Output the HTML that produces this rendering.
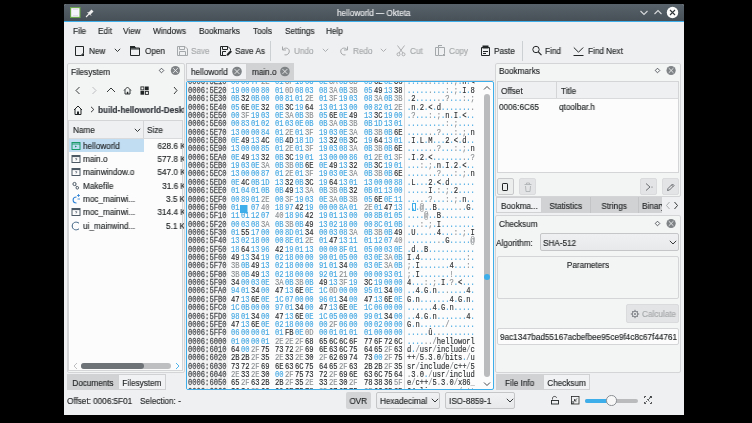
<!DOCTYPE html><html><head><meta charset="utf-8"><style>
*{margin:0;padding:0}
html,body{width:752px;height:423px;overflow:hidden;background:#000;position:relative}
.t{position:absolute;white-space:nowrap;font-family:"Liberation Sans",sans-serif;transform:scaleX(0.95);transform-origin:0 50%;will-change:transform;-webkit-text-stroke:0.15px currentColor}
.r{position:absolute;left:0;height:9px;width:310px;font-family:"Liberation Mono",monospace;font-size:8.6px;line-height:9px;will-change:transform;-webkit-text-stroke:0.15px currentColor}
.r span{position:absolute;top:0;white-space:pre;transform:scaleX(0.83);transform-origin:0 0}
.r .o{color:#505356;-webkit-text-stroke:0.3px currentColor}
.b{color:#45a8e2}
.g{color:#8b8f92}
.k{color:#2b2e30}
.r i{font-style:normal;display:inline-block;width:5.12px;text-align:center}
.cur{width:8.8px;height:8px;background:#3daee9;top:1px!important}
</style></head><body><div style="position:absolute;left:64px;top:4px;width:619.7px;height:411.3px;background:#eff0f1;border-radius:2px 2px 0 0;"></div>
<div style="position:absolute;left:64px;top:4px;width:619.7px;height:17px;background:linear-gradient(#58626a,#475057);border-radius:2px 2px 0 0;"></div>
<div style="position:absolute;left:64px;top:21px;width:619.7px;height:1px;background:#3daee9;"></div>
<svg style="position:absolute;left:69.5px;top:7px;" width="11" height="11" viewBox="0 0 11 11"><rect x="0.6" y="0.6" width="9.4" height="9.8" fill="#f6f3fa" stroke="#6aa84a" stroke-width="1.1"/><path d="M3 2.5 H8 M3 8.5 H8" stroke="#ddd3ea" stroke-width="0.8"/></svg>
<svg style="position:absolute;left:85px;top:8px;" width="10" height="10" viewBox="0 0 10 10"><path d="M1 9 L4 6" stroke="#f0f0f0" stroke-width="1.1"/><path d="M3 5 L6.5 1.5 L8.5 3.5 L5 7 Z" fill="#f0f0f0"/><path d="M2.5 4 L6 7.5" stroke="#f0f0f0" stroke-width="1"/></svg>
<div class="t" style="left:336.5px;top:6.90px;line-height:12px;font-size:8.6px;color:#e8eaec;">helloworld — Okteta</div>
<svg style="position:absolute;left:639px;top:8px;" width="10" height="9" viewBox="0 0 10 9"><path d="M1.5 3 L5 6.5 L8.5 3" fill="none" stroke="#d7d9db" stroke-width="1.1"/></svg>
<svg style="position:absolute;left:653px;top:8px;" width="10" height="9" viewBox="0 0 10 9"><path d="M1.5 6 L5 2.5 L8.5 6" fill="none" stroke="#d7d9db" stroke-width="1.1"/></svg>
<svg style="position:absolute;left:666px;top:6px;" width="13" height="13" viewBox="0 0 13 13"><circle cx="6.5" cy="6.5" r="5.7" fill="#fcfcfc"/><path d="M4 4 L9 9 M9 4 L4 9" stroke="#31363b" stroke-width="1.1"/></svg>
<div class="t" style="left:72.8px;top:24.80px;line-height:12px;font-size:8.6px;color:#232627;">File</div>
<div class="t" style="left:97.5px;top:24.80px;line-height:12px;font-size:8.6px;color:#232627;">Edit</div>
<div class="t" style="left:123.3px;top:24.80px;line-height:12px;font-size:8.6px;color:#232627;">View</div>
<div class="t" style="left:153px;top:24.80px;line-height:12px;font-size:8.6px;color:#232627;">Windows</div>
<div class="t" style="left:198.8px;top:24.80px;line-height:12px;font-size:8.6px;color:#232627;">Bookmarks</div>
<div class="t" style="left:252.9px;top:24.80px;line-height:12px;font-size:8.6px;color:#232627;">Tools</div>
<div class="t" style="left:284.5px;top:24.80px;line-height:12px;font-size:8.6px;color:#232627;">Settings</div>
<div class="t" style="left:326.4px;top:24.80px;line-height:12px;font-size:8.6px;color:#232627;">Help</div>
<div class="t" style="left:88.6px;top:45.00px;line-height:12px;font-size:8.6px;color:#232627;">New</div>
<div class="t" style="left:144.5px;top:45.00px;line-height:12px;font-size:8.6px;color:#232627;">Open</div>
<div class="t" style="left:191px;top:45.00px;line-height:12px;font-size:8.6px;color:#a5a8aa;">Save</div>
<div class="t" style="left:234.5px;top:45.00px;line-height:12px;font-size:8.6px;color:#232627;">Save As</div>
<div class="t" style="left:294px;top:45.00px;line-height:12px;font-size:8.6px;color:#a5a8aa;">Undo</div>
<div class="t" style="left:352.8px;top:45.00px;line-height:12px;font-size:8.6px;color:#a5a8aa;">Redo</div>
<div class="t" style="left:409.9px;top:45.00px;line-height:12px;font-size:8.6px;color:#a5a8aa;">Cut</div>
<div class="t" style="left:449.1px;top:45.00px;line-height:12px;font-size:8.6px;color:#a5a8aa;">Copy</div>
<div class="t" style="left:493.5px;top:45.00px;line-height:12px;font-size:8.6px;color:#232627;">Paste</div>
<div class="t" style="left:545.4px;top:45.00px;line-height:12px;font-size:8.6px;color:#232627;">Find</div>
<div class="t" style="left:587.7px;top:45.00px;line-height:12px;font-size:8.6px;color:#232627;">Find Next</div>
<div style="position:absolute;left:270px;top:41px;width:1px;height:20px;background:#cdd0d2;"></div>
<div style="position:absolute;left:521.5px;top:41px;width:1.0px;height:20px;background:#cdd0d2;"></div>
<svg style="position:absolute;left:113.7px;top:48px;" width="7" height="5" viewBox="0 0 7 5"><path d="M0.8 0.8 L3.5 3.5 L6.2 0.8" fill="none" stroke="#232627" stroke-width="0.9"/></svg>
<svg style="position:absolute;left:322px;top:48px;" width="7" height="5" viewBox="0 0 7 5"><path d="M0.8 0.8 L3.5 3.5 L6.2 0.8" fill="none" stroke="#a5a8aa" stroke-width="0.9"/></svg>
<svg style="position:absolute;left:379.5px;top:48px;" width="7" height="5" viewBox="0 0 7 5"><path d="M0.8 0.8 L3.5 3.5 L6.2 0.8" fill="none" stroke="#a5a8aa" stroke-width="0.9"/></svg>
<svg style="position:absolute;left:74px;top:45px;" width="12" height="12" viewBox="0 0 12 12"><path d="M1.5 1.5 H9.5 V8 L7 10.5 H1.5 Z" fill="none" stroke="#232627"/><path d="M10 8 V10.9 H6.6 Z" fill="#232627"/></svg>
<svg style="position:absolute;left:130px;top:45px;" width="12" height="12" viewBox="0 0 12 12"><path d="M0.5 1.5 H4.5 L5.5 3 H9.5 V10.5 H0.5 Z" fill="none" stroke="#232627"/><path d="M0 1 H4.8 L6 3.5 H0 Z" fill="#232627"/><path d="M0.5 4 H9.5" stroke="#232627"/></svg>
<svg style="position:absolute;left:177px;top:45px;" width="12" height="12" viewBox="0 0 12 12"><path d="M0.5 1.5 H8 L10.5 4 V10.5 H0.5 Z" fill="none" stroke="#a5a8aa"/><path d="M2.5 1.5 V4.5 H7.5 V1.5 M2.5 10.5 V6.5 H8.5 V10.5" fill="none" stroke="#a5a8aa"/></svg>
<svg style="position:absolute;left:220px;top:45px;" width="12" height="12" viewBox="0 0 12 12"><path d="M6 10.5 H0.5 V1.5 H8 L10.5 4 V5.5" fill="none" stroke="#232627"/><path d="M2.5 1.5 V4.5 H7.5 V1.5 M2.5 10.5 V6.5 H6" fill="none" stroke="#232627"/><path d="M6.5 10.8 L6.8 9 L10.5 5.3 L12 6.8 L8.3 10.5 Z" fill="#232627"/></svg>
<svg style="position:absolute;left:281px;top:45px;" width="12" height="12" viewBox="0 0 12 12"><path d="M1.5 1.5 V5 H5" fill="none" stroke="#a5a8aa"/><path d="M1.8 4.8 C3 2.5 7.8 2.2 8.3 6 C8.6 9 5.5 10.5 3.5 9.8" fill="none" stroke="#a5a8aa"/></svg>
<svg style="position:absolute;left:339px;top:45px;" width="12" height="12" viewBox="0 0 12 12"><path d="M8.5 1.5 V5 H5" fill="none" stroke="#a5a8aa"/><path d="M8.2 4.8 C7 2.5 2.2 2.2 1.7 6 C1.4 9 4.5 10.5 6.5 9.8" fill="none" stroke="#a5a8aa"/></svg>
<svg style="position:absolute;left:396px;top:45px;" width="12" height="12" viewBox="0 0 12 12"><path d="M1.5 0.5 L7 8 M8.5 0.5 L3 8" stroke="#a5a8aa" stroke-width="0.9"/><circle cx="2.5" cy="9.3" r="1.5" fill="none" stroke="#a5a8aa" stroke-width="0.9"/><circle cx="7.5" cy="9.3" r="1.5" fill="none" stroke="#a5a8aa" stroke-width="0.9"/></svg>
<svg style="position:absolute;left:435px;top:45px;" width="12" height="12" viewBox="0 0 12 12"><path d="M0.5 2.5 H3 M0.5 2.5 V10.5 H3" fill="none" stroke="#a5a8aa"/><path d="M3 0.5 H7 M3.5 0.5 V2.5" fill="none" stroke="#a5a8aa"/><path d="M3.5 2.5 H9.5 V8.5 L7.5 10.5 H3.5 Z" fill="none" stroke="#a5a8aa"/><path d="M10 8.5 V11 H7.2 Z" fill="#a5a8aa"/></svg>
<svg style="position:absolute;left:480px;top:45px;" width="12" height="12" viewBox="0 0 12 12"><path d="M1.5 2.5 H9.5 V10.5 H1.5 Z" fill="none" stroke="#232627"/><rect x="2.5" y="0.5" width="6" height="3" fill="#232627"/><path d="M3 6.5 H8 M3 8.5 H6" stroke="#232627"/></svg>
<svg style="position:absolute;left:532px;top:45px;" width="12" height="12" viewBox="0 0 12 12"><circle cx="4" cy="4.5" r="3.2" fill="none" stroke="#232627"/><path d="M6.4 7 L9.5 10.1" stroke="#232627" stroke-width="1.1"/></svg>
<svg style="position:absolute;left:573px;top:45px;" width="12" height="12" viewBox="0 0 12 12"><path d="M0.8 2.5 L5.5 7.2 L10.2 2.5" fill="none" stroke="#232627"/><path d="M0.5 10.5 H10.5" stroke="#232627"/></svg>
<div style="position:absolute;left:67px;top:63px;width:118px;height:310px;background:#f3f4f4;border:1px solid #d3d5d6;box-sizing:border-box;border-radius:2px;"></div>
<div class="t" style="left:70.7px;top:65.70px;line-height:12px;font-size:8.6px;color:#232627;">Filesystem</div>
<svg style="position:absolute;left:157px;top:66px;" width="8" height="8" viewBox="0 0 8 8"><path d="M4.5 2.2 L6.8 4.5 L4.5 6.8 L2.2 4.5 Z" fill="none" stroke="#3a3f44" stroke-width="0.8"/></svg>
<svg style="position:absolute;left:169px;top:64px;" width="12" height="12" viewBox="0 0 12 12"><circle cx="6.400000000000006" cy="6.5" r="4.6" fill="#7f8386"/><path d="M4.000000000000005 4.1 L8.800000000000006 8.9 M8.800000000000006 4.1 L4.000000000000005 8.9" stroke="#f3f4f4" stroke-width="0.85"/></svg>
<svg style="position:absolute;left:74px;top:86px;" width="8" height="9" viewBox="0 0 8 9"><path d="M5.5 1 L2 4.5 L5.5 8" fill="none" stroke="#232627" stroke-width="0.9"/></svg>
<svg style="position:absolute;left:90px;top:86px;" width="8" height="9" viewBox="0 0 8 9"><path d="M2.5 1 L6 4.5 L2.5 8" fill="none" stroke="#b5b8ba" stroke-width="0.9"/></svg>
<svg style="position:absolute;left:106px;top:86px;" width="10" height="9" viewBox="0 0 10 9"><path d="M1 6 L5 2 L9 6" fill="none" stroke="#232627" stroke-width="0.9"/></svg>
<svg style="position:absolute;left:123px;top:86px;" width="9" height="9" viewBox="0 0 9 9"><path d="M1 4.5 L4.5 1 L8 4.5 M2 3.5 V8 H7 V3.5" fill="none" stroke="#232627" stroke-width="0.9"/><rect x="3.8" y="5.8" width="1.5" height="2.2" fill="#232627"/></svg>
<svg style="position:absolute;left:140px;top:86px;" width="9" height="9" viewBox="0 0 9 9"><rect x="0.9" y="0.9" width="3" height="3" fill="none" stroke="#232627" stroke-width="0.9"/><rect x="5" y="0.5" width="3.7" height="3.7" fill="#232627"/><rect x="0.5" y="5" width="3.7" height="3.7" fill="#232627"/><rect x="5.4" y="5.4" width="3" height="3" fill="none" stroke="#232627" stroke-width="0.9"/></svg>
<svg style="position:absolute;left:172px;top:86px;" width="7" height="9" viewBox="0 0 7 9"><path d="M2 1 L5 4.5 L2 8" fill="none" stroke="#232627" stroke-width="0.9"/></svg>
<svg style="position:absolute;left:72.5px;top:105px;" width="10" height="10" viewBox="0 0 10 10"><path d="M1 5 L5 1 L9 5 M2 4 V9.5 H8 V4" fill="none" stroke="#232627" stroke-width="1"/><rect x="4" y="6.5" width="2" height="3" fill="#232627"/></svg>
<svg style="position:absolute;left:89.5px;top:106px;" width="5" height="7" viewBox="0 0 5 7"><path d="M1 0.8 L3.8 3.5 L1 6.2" fill="none" stroke="#232627" stroke-width="0.9"/></svg>
<div style="position:absolute;left:97.5px;top:103.5px;width:86px;height:12px;overflow:hidden;"><div class="t" style="left:0;top:0;line-height:12px;font-size:8.6px;font-weight:bold;color:#31363b;">build-helloworld-Desktop</div></div>
<div style="position:absolute;left:68px;top:120px;width:115px;height:251px;background:#fcfcfc;border:1px solid #d3d5d6;box-sizing:border-box;"></div>
<div style="position:absolute;left:69px;top:121px;width:113px;height:18px;background:#eff0f1;border-bottom:1px solid #d8dadb;box-sizing:border-box;"></div>
<div style="position:absolute;left:143px;top:121px;width:1px;height:17px;background:#d3d5d6;"></div>
<div class="t" style="left:72.7px;top:124.00px;line-height:12px;font-size:8.6px;color:#232627;">Name</div>
<svg style="position:absolute;left:134px;top:128px;" width="7" height="5" viewBox="0 0 7 5"><path d="M0.8 0.8 L3.5 3.5 L6.2 0.8" fill="none" stroke="#232627" stroke-width="0.9"/></svg>
<div class="t" style="left:147.4px;top:124.00px;line-height:12px;font-size:8.6px;color:#232627;">Size</div>
<div style="position:absolute;left:69px;top:139px;width:74.5px;height:13px;background:#c1ddf2;"></div>
<div style="position:absolute;left:144px;top:138px;width:40px;height:95px;overflow:hidden;">
<div class="t" style="right:-1.5px;transform-origin:100% 50%;top:1.70px;line-height:12px;font-size:8.6px;color:#232627;">628.6 K</div>
<div class="t" style="right:-1.5px;transform-origin:100% 50%;top:15.00px;line-height:12px;font-size:8.6px;color:#232627;">577.8 K</div>
<div class="t" style="right:-1.5px;transform-origin:100% 50%;top:28.30px;line-height:12px;font-size:8.6px;color:#232627;">547.0 K</div>
<div class="t" style="right:-1.5px;transform-origin:100% 50%;top:41.60px;line-height:12px;font-size:8.6px;color:#232627;">31.6 K</div>
<div class="t" style="right:-1.5px;transform-origin:100% 50%;top:54.90px;line-height:12px;font-size:8.6px;color:#232627;">3.5 K</div>
<div class="t" style="right:-1.5px;transform-origin:100% 50%;top:68.20px;line-height:12px;font-size:8.6px;color:#232627;">314.4 K</div>
<div class="t" style="right:-1.5px;transform-origin:100% 50%;top:81.50px;line-height:12px;font-size:8.6px;color:#232627;">5.1 K</div>
</div>
<div class="t" style="left:82.8px;top:139.70px;line-height:12px;font-size:8.6px;color:#232627;">helloworld</div>
<div class="t" style="left:82.8px;top:153.00px;line-height:12px;font-size:8.6px;color:#232627;">main.o</div>
<div class="t" style="left:82.8px;top:166.30px;line-height:12px;font-size:8.6px;color:#232627;">mainwindow.o</div>
<div class="t" style="left:82.8px;top:179.60px;line-height:12px;font-size:8.6px;color:#232627;">Makefile</div>
<div class="t" style="left:82.8px;top:192.90px;line-height:12px;font-size:8.6px;color:#232627;">moc_mainwi...</div>
<div class="t" style="left:82.8px;top:206.20px;line-height:12px;font-size:8.6px;color:#232627;">moc_mainwi...</div>
<div class="t" style="left:82.8px;top:219.50px;line-height:12px;font-size:8.6px;color:#232627;">ui_mainwind...</div>
<svg style="position:absolute;left:70.5px;top:140.7px;" width="10" height="10" viewBox="0 0 10 10"><rect x="1" y="1.5" width="8" height="7" fill="none" stroke="#1d9a6c" stroke-width="1"/><path d="M1 3 H9" stroke="#1d9a6c" stroke-width="1"/><path d="M4 4.5 L6 5.5 L4 6.5 Z" fill="#1d9a6c"/></svg>
<svg style="position:absolute;left:70.5px;top:154.0px;" width="10" height="10" viewBox="0 0 10 10"><rect x="1" y="1.5" width="8" height="7" fill="none" stroke="#4d5a66" stroke-width="1"/><path d="M1 2.5 H9" stroke="#4d5a66" stroke-width="1.2"/><path d="M4.2 4.5 H5.8 V5.5 H5 V6.5" fill="none" stroke="#4d5a66" stroke-width="0.6"/></svg>
<svg style="position:absolute;left:70.5px;top:167.29999999999998px;" width="10" height="10" viewBox="0 0 10 10"><rect x="1" y="1.5" width="8" height="7" fill="none" stroke="#4d5a66" stroke-width="1"/><path d="M1 2.5 H9" stroke="#4d5a66" stroke-width="1.2"/><path d="M4.2 4.5 H5.8 V5.5 H5 V6.5" fill="none" stroke="#4d5a66" stroke-width="0.6"/></svg>
<svg style="position:absolute;left:70.5px;top:180.6px;" width="10" height="10" viewBox="0 0 10 10"><circle cx="3.5" cy="3" r="1.6" fill="none" stroke="#4d5a66" stroke-width="1"/><circle cx="6.3" cy="6.8" r="1.3" fill="none" stroke="#4d5a66" stroke-width="1"/><path d="M4.5 4.3 L5.5 5.6" stroke="#4d5a66" stroke-width="0.9"/></svg>
<svg style="position:absolute;left:70.5px;top:193.89999999999998px;" width="10" height="10" viewBox="0 0 10 10"><path d="M5.5 3 C1 3 1 9 5.5 9" fill="none" stroke="#2a7fd4" stroke-width="1.1"/><path d="M6 1.5 H9 M7.5 0 V3 M6.5 5 H9" stroke="#2a7fd4" stroke-width="0.8"/></svg>
<svg style="position:absolute;left:70.5px;top:207.2px;" width="10" height="10" viewBox="0 0 10 10"><rect x="1" y="1.5" width="8" height="7" fill="none" stroke="#4d5a66" stroke-width="1"/><path d="M1 2.5 H9" stroke="#4d5a66" stroke-width="1.2"/><path d="M4.2 4.5 H5.8 V5.5 H5 V6.5" fill="none" stroke="#4d5a66" stroke-width="0.6"/></svg>
<svg style="position:absolute;left:70.5px;top:220.5px;" width="10" height="10" viewBox="0 0 10 10"><path d="M8 2.2 C5 0 1.2 1.5 1.2 5 C1.2 8.5 5 10 8 7.8" fill="none" stroke="#3b5f80" stroke-width="1"/></svg>
<svg style="position:absolute;left:72px;top:362px;" width="7" height="8" viewBox="0 0 7 8"><path d="M5 1 L2 4 L5 7" fill="none" stroke="#b5b8ba" stroke-width="0.9"/></svg>
<div style="position:absolute;left:80.5px;top:362.5px;width:90.0px;height:6.0px;background:#bdbfc1;border-radius:3px;"></div>
<div style="position:absolute;left:80.5px;top:362.5px;width:63.0px;height:6.0px;background:#6e7377;border-radius:3px;"></div>
<svg style="position:absolute;left:174px;top:362px;" width="7" height="8" viewBox="0 0 7 8"><path d="M2 1 L5 4 L2 7" fill="none" stroke="#3daee9" stroke-width="0.9"/></svg>
<div style="position:absolute;left:66.5px;top:374.3px;width:51.900000000000006px;height:15.899999999999977px;background:#d1d2d3;"></div>
<div class="t" style="left:66.5px;width:51.900000000000006px;text-align:center;transform-origin:50% 50%;top:377.05px;line-height:12px;font-size:8.6px;color:#232627;">Documents</div>
<div style="position:absolute;left:118.4px;top:374.3px;width:47.79999999999998px;height:15.899999999999977px;background:#f1f2f3;border:1px solid #cfd1d2;box-sizing:border-box;"></div>
<div class="t" style="left:118.4px;width:47.79999999999998px;text-align:center;transform-origin:50% 50%;top:377.05px;line-height:12px;font-size:8.6px;color:#232627;">Filesystem</div>
<div style="position:absolute;left:186px;top:79.5px;width:307.5px;height:1.0px;background:#d9d5d5;"></div>
<div style="position:absolute;left:186px;top:63px;width:60.5px;height:17px;background:#f1f2f3;border:1px solid #cfd1d2;box-sizing:border-box;"></div>
<div class="t" style="left:191.3px;top:65.50px;line-height:12px;font-size:8.6px;color:#232627;">helloworld</div>
<svg style="position:absolute;left:231px;top:65px;" width="12" height="12" viewBox="0 0 12 12"><circle cx="6" cy="6.5" r="4.8" fill="#7f8386"/><path d="M3.6 4.1 L8.4 8.9 M8.4 4.1 L3.6 8.9" stroke="#f3f4f4" stroke-width="0.85"/></svg>
<div style="position:absolute;left:246.5px;top:63px;width:47.10000000000002px;height:16.5px;background:#d1d2d3;"></div>
<div class="t" style="left:251.9px;top:65.50px;line-height:12px;font-size:8.6px;color:#232627;">main.o</div>
<svg style="position:absolute;left:278px;top:65px;" width="12" height="12" viewBox="0 0 12 12"><circle cx="6.899999999999977" cy="6.5" r="4.8" fill="#7f8386"/><path d="M4.499999999999977 4.1 L9.299999999999978 8.9 M9.299999999999978 4.1 L4.499999999999977 8.9" stroke="#f3f4f4" stroke-width="0.85"/></svg>
<div style="position:absolute;left:186px;top:81px;width:307.5px;height:308.5px;background:#fcfcfc;border:1px solid #3daee9;box-sizing:border-box;border-radius:2px;overflow:hidden;">
<div style="position:absolute;left:0;top:0;width:41px;height:100%;background:#f3f3f3;"></div>
<div style="position:absolute;left:217px;top:0;width:1px;height:100%;background:#d8d9da;"></div>
<div class="r" style="top:-4.00px"><span class="o" style="left:0.80px">0006:5E10</span><span class="b" style="left:43.60px">00</span><span class="b" style="left:53.65px">00</span><span class="b" style="left:63.70px">7F</span><span class="g" style="left:73.75px">2E</span><span class="b" style="left:87.90px">01</span><span class="g" style="left:97.95px">3F</span><span class="b" style="left:108.00px">19</span><span class="b" style="left:118.05px">03</span><span class="b" style="left:132.20px">0E</span><span class="g" style="left:142.25px">3A</span><span class="b" style="left:152.30px">0B</span><span class="g" style="left:162.35px">3B</span><span class="b" style="left:176.50px">05</span><span class="k" style="left:186.55px">6E</span><span class="b" style="left:196.60px">0E</span><span class="k" style="left:206.65px">3C</span><span class="a" style="left:220.00px"><i class="b">.</i><i class="b">.</i><i class="b">.</i><i class="g">.</i><i class="b">.</i><i class="g">?</i><i class="b">.</i><i class="b">.</i><i class="b">.</i><i class="g">:</i><i class="b">.</i><i class="g">;</i><i class="b">.</i><i class="k">n</i><i class="b">.</i><i class="k">&lt;</i></span></div>
<div class="r" style="top:5.00px"><span class="o" style="left:0.80px">0006:5E20</span><span class="b" style="left:43.60px">19</span><span class="b" style="left:53.65px">00</span><span class="b" style="left:63.70px">00</span><span class="b" style="left:73.75px">80</span><span class="b" style="left:87.90px">01</span><span class="g" style="left:97.95px">0D</span><span class="b" style="left:108.00px">08</span><span class="b" style="left:118.05px">03</span><span class="b" style="left:132.20px">08</span><span class="g" style="left:142.25px">3A</span><span class="b" style="left:152.30px">0B</span><span class="g" style="left:162.35px">3B</span><span class="b" style="left:176.50px">05</span><span class="k" style="left:186.55px">49</span><span class="b" style="left:196.60px">13</span><span class="k" style="left:206.65px">38</span><span class="a" style="left:220.00px"><i class="b">.</i><i class="b">.</i><i class="b">.</i><i class="b">.</i><i class="b">.</i><i class="g">.</i><i class="b">.</i><i class="b">.</i><i class="b">.</i><i class="g">:</i><i class="b">.</i><i class="g">;</i><i class="b">.</i><i class="k">I</i><i class="b">.</i><i class="k">8</i></span></div>
<div class="r" style="top:13.00px"><span class="o" style="left:0.80px">0006:5E30</span><span class="b" style="left:43.60px">0B</span><span class="k" style="left:53.65px">32</span><span class="b" style="left:63.70px">0B</span><span class="b" style="left:73.75px">00</span><span class="b" style="left:87.90px">00</span><span class="b" style="left:97.95px">81</span><span class="b" style="left:108.00px">01</span><span class="g" style="left:118.05px">2E</span><span class="b" style="left:132.20px">01</span><span class="g" style="left:142.25px">3F</span><span class="b" style="left:152.30px">19</span><span class="b" style="left:162.35px">03</span><span class="b" style="left:176.50px">08</span><span class="g" style="left:186.55px">3A</span><span class="b" style="left:196.60px">0B</span><span class="g" style="left:206.65px">3B</span><span class="a" style="left:220.00px"><i class="b">.</i><i class="k">2</i><i class="b">.</i><i class="b">.</i><i class="b">.</i><i class="b">.</i><i class="b">.</i><i class="g">.</i><i class="b">.</i><i class="g">?</i><i class="b">.</i><i class="b">.</i><i class="b">.</i><i class="g">:</i><i class="b">.</i><i class="g">;</i></span></div>
<div class="r" style="top:22.00px"><span class="o" style="left:0.80px">0006:5E40</span><span class="b" style="left:43.60px">05</span><span class="k" style="left:53.65px">6E</span><span class="b" style="left:63.70px">0E</span><span class="k" style="left:73.75px">32</span><span class="b" style="left:87.90px">0B</span><span class="k" style="left:97.95px">3C</span><span class="b" style="left:108.00px">19</span><span class="k" style="left:118.05px">64</span><span class="b" style="left:132.20px">13</span><span class="b" style="left:142.25px">01</span><span class="b" style="left:152.30px">13</span><span class="b" style="left:162.35px">00</span><span class="b" style="left:176.50px">00</span><span class="b" style="left:186.55px">82</span><span class="b" style="left:196.60px">01</span><span class="g" style="left:206.65px">2E</span><span class="a" style="left:220.00px"><i class="b">.</i><i class="k">n</i><i class="b">.</i><i class="k">2</i><i class="b">.</i><i class="k">&lt;</i><i class="b">.</i><i class="k">d</i><i class="b">.</i><i class="b">.</i><i class="b">.</i><i class="b">.</i><i class="b">.</i><i class="b">.</i><i class="b">.</i><i class="g">.</i></span></div>
<div class="r" style="top:30.00px"><span class="o" style="left:0.80px">0006:5E50</span><span class="b" style="left:43.60px">00</span><span class="g" style="left:53.65px">3F</span><span class="b" style="left:63.70px">19</span><span class="b" style="left:73.75px">03</span><span class="b" style="left:87.90px">0E</span><span class="g" style="left:97.95px">3A</span><span class="b" style="left:108.00px">0B</span><span class="g" style="left:118.05px">3B</span><span class="b" style="left:132.20px">05</span><span class="k" style="left:142.25px">6E</span><span class="b" style="left:152.30px">0E</span><span class="k" style="left:162.35px">49</span><span class="b" style="left:176.50px">13</span><span class="k" style="left:186.55px">3C</span><span class="b" style="left:196.60px">19</span><span class="b" style="left:206.65px">00</span><span class="a" style="left:220.00px"><i class="b">.</i><i class="g">?</i><i class="b">.</i><i class="b">.</i><i class="b">.</i><i class="g">:</i><i class="b">.</i><i class="g">;</i><i class="b">.</i><i class="k">n</i><i class="b">.</i><i class="k">I</i><i class="b">.</i><i class="k">&lt;</i><i class="b">.</i><i class="b">.</i></span></div>
<div class="r" style="top:38.00px"><span class="o" style="left:0.80px">0006:5E60</span><span class="b" style="left:43.60px">00</span><span class="b" style="left:53.65px">83</span><span class="b" style="left:63.70px">01</span><span class="b" style="left:73.75px">02</span><span class="b" style="left:87.90px">01</span><span class="b" style="left:97.95px">03</span><span class="b" style="left:108.00px">0E</span><span class="b" style="left:118.05px">0B</span><span class="b" style="left:132.20px">0B</span><span class="g" style="left:142.25px">3A</span><span class="b" style="left:152.30px">0B</span><span class="g" style="left:162.35px">3B</span><span class="b" style="left:176.50px">0B</span><span class="b" style="left:186.55px">1D</span><span class="b" style="left:196.60px">13</span><span class="b" style="left:206.65px">01</span><span class="a" style="left:220.00px"><i class="b">.</i><i class="b">.</i><i class="b">.</i><i class="b">.</i><i class="b">.</i><i class="b">.</i><i class="b">.</i><i class="b">.</i><i class="b">.</i><i class="g">:</i><i class="b">.</i><i class="g">;</i><i class="b">.</i><i class="b">.</i><i class="b">.</i><i class="b">.</i></span></div>
<div class="r" style="top:47.00px"><span class="o" style="left:0.80px">0006:5E70</span><span class="b" style="left:43.60px">13</span><span class="b" style="left:53.65px">00</span><span class="b" style="left:63.70px">00</span><span class="b" style="left:73.75px">84</span><span class="b" style="left:87.90px">01</span><span class="g" style="left:97.95px">2E</span><span class="b" style="left:108.00px">01</span><span class="g" style="left:118.05px">3F</span><span class="b" style="left:132.20px">19</span><span class="b" style="left:142.25px">03</span><span class="b" style="left:152.30px">0E</span><span class="g" style="left:162.35px">3A</span><span class="b" style="left:176.50px">0B</span><span class="g" style="left:186.55px">3B</span><span class="b" style="left:196.60px">0B</span><span class="k" style="left:206.65px">6E</span><span class="a" style="left:220.00px"><i class="b">.</i><i class="b">.</i><i class="b">.</i><i class="b">.</i><i class="b">.</i><i class="g">.</i><i class="b">.</i><i class="g">?</i><i class="b">.</i><i class="b">.</i><i class="b">.</i><i class="g">:</i><i class="b">.</i><i class="g">;</i><i class="b">.</i><i class="k">n</i></span></div>
<div class="r" style="top:55.00px"><span class="o" style="left:0.80px">0006:5E80</span><span class="b" style="left:43.60px">0E</span><span class="k" style="left:53.65px">49</span><span class="b" style="left:63.70px">13</span><span class="k" style="left:73.75px">4C</span><span class="b" style="left:87.90px">0B</span><span class="k" style="left:97.95px">4D</span><span class="b" style="left:108.00px">18</span><span class="b" style="left:118.05px">1D</span><span class="b" style="left:132.20px">13</span><span class="k" style="left:142.25px">32</span><span class="b" style="left:152.30px">0B</span><span class="k" style="left:162.35px">3C</span><span class="b" style="left:176.50px">19</span><span class="k" style="left:186.55px">64</span><span class="b" style="left:196.60px">13</span><span class="b" style="left:206.65px">01</span><span class="a" style="left:220.00px"><i class="b">.</i><i class="k">I</i><i class="b">.</i><i class="k">L</i><i class="b">.</i><i class="k">M</i><i class="b">.</i><i class="b">.</i><i class="b">.</i><i class="k">2</i><i class="b">.</i><i class="k">&lt;</i><i class="b">.</i><i class="k">d</i><i class="b">.</i><i class="b">.</i></span></div>
<div class="r" style="top:63.00px"><span class="o" style="left:0.80px">0006:5E90</span><span class="b" style="left:43.60px">13</span><span class="b" style="left:53.65px">00</span><span class="b" style="left:63.70px">00</span><span class="b" style="left:73.75px">85</span><span class="b" style="left:87.90px">01</span><span class="g" style="left:97.95px">2E</span><span class="b" style="left:108.00px">01</span><span class="g" style="left:118.05px">3F</span><span class="b" style="left:132.20px">19</span><span class="b" style="left:142.25px">03</span><span class="b" style="left:152.30px">08</span><span class="g" style="left:162.35px">3A</span><span class="b" style="left:176.50px">0B</span><span class="g" style="left:186.55px">3B</span><span class="b" style="left:196.60px">0B</span><span class="k" style="left:206.65px">6E</span><span class="a" style="left:220.00px"><i class="b">.</i><i class="b">.</i><i class="b">.</i><i class="b">.</i><i class="b">.</i><i class="g">.</i><i class="b">.</i><i class="g">?</i><i class="b">.</i><i class="b">.</i><i class="b">.</i><i class="g">:</i><i class="b">.</i><i class="g">;</i><i class="b">.</i><i class="k">n</i></span></div>
<div class="r" style="top:72.00px"><span class="o" style="left:0.80px">0006:5EA0</span><span class="b" style="left:43.60px">0E</span><span class="k" style="left:53.65px">49</span><span class="b" style="left:63.70px">13</span><span class="k" style="left:73.75px">32</span><span class="b" style="left:87.90px">0B</span><span class="k" style="left:97.95px">3C</span><span class="b" style="left:108.00px">19</span><span class="b" style="left:118.05px">01</span><span class="b" style="left:132.20px">13</span><span class="b" style="left:142.25px">00</span><span class="b" style="left:152.30px">00</span><span class="b" style="left:162.35px">86</span><span class="b" style="left:176.50px">01</span><span class="g" style="left:186.55px">2E</span><span class="b" style="left:196.60px">01</span><span class="g" style="left:206.65px">3F</span><span class="a" style="left:220.00px"><i class="b">.</i><i class="k">I</i><i class="b">.</i><i class="k">2</i><i class="b">.</i><i class="k">&lt;</i><i class="b">.</i><i class="b">.</i><i class="b">.</i><i class="b">.</i><i class="b">.</i><i class="b">.</i><i class="b">.</i><i class="g">.</i><i class="b">.</i><i class="g">?</i></span></div>
<div class="r" style="top:80.00px"><span class="o" style="left:0.80px">0006:5EB0</span><span class="b" style="left:43.60px">19</span><span class="b" style="left:53.65px">03</span><span class="b" style="left:63.70px">0E</span><span class="g" style="left:73.75px">3A</span><span class="b" style="left:87.90px">0B</span><span class="g" style="left:97.95px">3B</span><span class="b" style="left:108.00px">0B</span><span class="k" style="left:118.05px">6E</span><span class="b" style="left:132.20px">0E</span><span class="k" style="left:142.25px">49</span><span class="b" style="left:152.30px">13</span><span class="k" style="left:162.35px">32</span><span class="b" style="left:176.50px">0B</span><span class="k" style="left:186.55px">3C</span><span class="b" style="left:196.60px">19</span><span class="b" style="left:206.65px">01</span><span class="a" style="left:220.00px"><i class="b">.</i><i class="b">.</i><i class="b">.</i><i class="g">:</i><i class="b">.</i><i class="g">;</i><i class="b">.</i><i class="k">n</i><i class="b">.</i><i class="k">I</i><i class="b">.</i><i class="k">2</i><i class="b">.</i><i class="k">&lt;</i><i class="b">.</i><i class="b">.</i></span></div>
<div class="r" style="top:88.00px"><span class="o" style="left:0.80px">0006:5EC0</span><span class="b" style="left:43.60px">13</span><span class="b" style="left:53.65px">00</span><span class="b" style="left:63.70px">00</span><span class="b" style="left:73.75px">87</span><span class="b" style="left:87.90px">01</span><span class="g" style="left:97.95px">2E</span><span class="b" style="left:108.00px">01</span><span class="g" style="left:118.05px">3F</span><span class="b" style="left:132.20px">19</span><span class="b" style="left:142.25px">03</span><span class="b" style="left:152.30px">0E</span><span class="g" style="left:162.35px">3A</span><span class="b" style="left:176.50px">0B</span><span class="g" style="left:186.55px">3B</span><span class="b" style="left:196.60px">0B</span><span class="k" style="left:206.65px">6E</span><span class="a" style="left:220.00px"><i class="b">.</i><i class="b">.</i><i class="b">.</i><i class="b">.</i><i class="b">.</i><i class="g">.</i><i class="b">.</i><i class="g">?</i><i class="b">.</i><i class="b">.</i><i class="b">.</i><i class="g">:</i><i class="b">.</i><i class="g">;</i><i class="b">.</i><i class="k">n</i></span></div>
<div class="r" style="top:97.00px"><span class="o" style="left:0.80px">0006:5ED0</span><span class="b" style="left:43.60px">0E</span><span class="k" style="left:53.65px">4C</span><span class="b" style="left:63.70px">0B</span><span class="b" style="left:73.75px">1D</span><span class="b" style="left:87.90px">13</span><span class="k" style="left:97.95px">32</span><span class="b" style="left:108.00px">0B</span><span class="k" style="left:118.05px">3C</span><span class="b" style="left:132.20px">19</span><span class="k" style="left:142.25px">64</span><span class="b" style="left:152.30px">13</span><span class="b" style="left:162.35px">01</span><span class="b" style="left:176.50px">13</span><span class="b" style="left:186.55px">00</span><span class="b" style="left:196.60px">00</span><span class="b" style="left:206.65px">88</span><span class="a" style="left:220.00px"><i class="b">.</i><i class="k">L</i><i class="b">.</i><i class="b">.</i><i class="b">.</i><i class="k">2</i><i class="b">.</i><i class="k">&lt;</i><i class="b">.</i><i class="k">d</i><i class="b">.</i><i class="b">.</i><i class="b">.</i><i class="b">.</i><i class="b">.</i><i class="b">.</i></span></div>
<div class="r" style="top:105.00px"><span class="o" style="left:0.80px">0006:5EE0</span><span class="b" style="left:43.60px">01</span><span class="b" style="left:53.65px">04</span><span class="b" style="left:63.70px">01</span><span class="b" style="left:73.75px">0B</span><span class="b" style="left:87.90px">0B</span><span class="k" style="left:97.95px">49</span><span class="b" style="left:108.00px">13</span><span class="g" style="left:118.05px">3A</span><span class="b" style="left:132.20px">0B</span><span class="g" style="left:142.25px">3B</span><span class="b" style="left:152.30px">0B</span><span class="k" style="left:162.35px">32</span><span class="b" style="left:176.50px">0B</span><span class="b" style="left:186.55px">01</span><span class="b" style="left:196.60px">13</span><span class="b" style="left:206.65px">00</span><span class="a" style="left:220.00px"><i class="b">.</i><i class="b">.</i><i class="b">.</i><i class="b">.</i><i class="b">.</i><i class="k">I</i><i class="b">.</i><i class="g">:</i><i class="b">.</i><i class="g">;</i><i class="b">.</i><i class="k">2</i><i class="b">.</i><i class="b">.</i><i class="b">.</i><i class="b">.</i></span></div>
<div class="r" style="top:114.00px"><span class="o" style="left:0.80px">0006:5EF0</span><span class="b" style="left:43.60px">00</span><span class="b" style="left:53.65px">89</span><span class="b" style="left:63.70px">01</span><span class="g" style="left:73.75px">2E</span><span class="b" style="left:87.90px">00</span><span class="g" style="left:97.95px">3F</span><span class="b" style="left:108.00px">19</span><span class="b" style="left:118.05px">03</span><span class="b" style="left:132.20px">0E</span><span class="g" style="left:142.25px">3A</span><span class="b" style="left:152.30px">0B</span><span class="g" style="left:162.35px">3B</span><span class="b" style="left:176.50px">05</span><span class="k" style="left:186.55px">6E</span><span class="b" style="left:196.60px">0E</span><span class="b" style="left:206.65px">11</span><span class="a" style="left:220.00px"><i class="b">.</i><i class="b">.</i><i class="b">.</i><i class="g">.</i><i class="b">.</i><i class="g">?</i><i class="b">.</i><i class="b">.</i><i class="b">.</i><i class="g">:</i><i class="b">.</i><i class="g">;</i><i class="b">.</i><i class="k">n</i><i class="b">.</i><i class="b">.</i></span></div>
<div class="r" style="top:122.00px"><span class="o" style="left:0.80px">0006:5F00</span><span class="b" style="left:43.60px">01</span><span class="cur" style="left:53.45px"></span><span class="b" style="left:63.70px">07</span><span class="g" style="left:73.75px">40</span><span class="b" style="left:87.90px">18</span><span class="b" style="left:97.95px">97</span><span class="k" style="left:108.00px">42</span><span class="b" style="left:118.05px">19</span><span class="b" style="left:132.20px">00</span><span class="b" style="left:142.25px">00</span><span class="b" style="left:152.30px">8A</span><span class="b" style="left:162.35px">01</span><span class="g" style="left:176.50px">2E</span><span class="b" style="left:186.55px">01</span><span class="k" style="left:196.60px">47</span><span class="b" style="left:206.65px">13</span><span class="a" style="left:220.00px"><i class="b">.</i><i class="b">.</i><i class="b">.</i><i class="g">@</i><i class="b">.</i><i class="b">.</i><i class="k">B</i><i class="b">.</i><i class="b">.</i><i class="b">.</i><i class="b">.</i><i class="b">.</i><i class="g">.</i><i class="b">.</i><i class="k">G</i><i class="b">.</i></span></div>
<div class="r" style="top:130.00px"><span class="o" style="left:0.80px">0006:5F10</span><span class="b" style="left:43.60px">11</span><span class="b" style="left:53.65px">01</span><span class="b" style="left:63.70px">12</span><span class="b" style="left:73.75px">07</span><span class="g" style="left:87.90px">40</span><span class="b" style="left:97.95px">18</span><span class="b" style="left:108.00px">96</span><span class="k" style="left:118.05px">42</span><span class="b" style="left:132.20px">19</span><span class="b" style="left:142.25px">01</span><span class="b" style="left:152.30px">13</span><span class="b" style="left:162.35px">00</span><span class="b" style="left:176.50px">00</span><span class="b" style="left:186.55px">8B</span><span class="b" style="left:196.60px">01</span><span class="b" style="left:206.65px">05</span><span class="a" style="left:220.00px"><i class="b">.</i><i class="b">.</i><i class="b">.</i><i class="b">.</i><i class="g">@</i><i class="b">.</i><i class="b">.</i><i class="k">B</i><i class="b">.</i><i class="b">.</i><i class="b">.</i><i class="b">.</i><i class="b">.</i><i class="b">.</i><i class="b">.</i><i class="b">.</i></span></div>
<div class="r" style="top:139.00px"><span class="o" style="left:0.80px">0006:5F20</span><span class="b" style="left:43.60px">00</span><span class="b" style="left:53.65px">03</span><span class="b" style="left:63.70px">08</span><span class="g" style="left:73.75px">3A</span><span class="b" style="left:87.90px">0B</span><span class="g" style="left:97.95px">3B</span><span class="b" style="left:108.00px">0B</span><span class="k" style="left:118.05px">49</span><span class="b" style="left:132.20px">13</span><span class="b" style="left:142.25px">02</span><span class="b" style="left:152.30px">18</span><span class="b" style="left:162.35px">00</span><span class="b" style="left:176.50px">00</span><span class="b" style="left:186.55px">8C</span><span class="b" style="left:196.60px">01</span><span class="b" style="left:206.65px">0B</span><span class="a" style="left:220.00px"><i class="b">.</i><i class="b">.</i><i class="b">.</i><i class="g">:</i><i class="b">.</i><i class="g">;</i><i class="b">.</i><i class="k">I</i><i class="b">.</i><i class="b">.</i><i class="b">.</i><i class="b">.</i><i class="b">.</i><i class="b">.</i><i class="b">.</i><i class="b">.</i></span></div>
<div class="r" style="top:147.00px"><span class="o" style="left:0.80px">0006:5F30</span><span class="b" style="left:43.60px">01</span><span class="k" style="left:53.65px">55</span><span class="b" style="left:63.70px">17</span><span class="b" style="left:73.75px">00</span><span class="b" style="left:87.90px">00</span><span class="b" style="left:97.95px">8D</span><span class="b" style="left:108.00px">01</span><span class="k" style="left:118.05px">34</span><span class="b" style="left:132.20px">00</span><span class="b" style="left:142.25px">03</span><span class="b" style="left:152.30px">08</span><span class="g" style="left:162.35px">3A</span><span class="b" style="left:176.50px">0B</span><span class="g" style="left:186.55px">3B</span><span class="b" style="left:196.60px">0B</span><span class="k" style="left:206.65px">49</span><span class="a" style="left:220.00px"><i class="b">.</i><i class="k">U</i><i class="b">.</i><i class="b">.</i><i class="b">.</i><i class="b">.</i><i class="b">.</i><i class="k">4</i><i class="b">.</i><i class="b">.</i><i class="b">.</i><i class="g">:</i><i class="b">.</i><i class="g">;</i><i class="b">.</i><i class="k">I</i></span></div>
<div class="r" style="top:155.00px"><span class="o" style="left:0.80px">0006:5F40</span><span class="b" style="left:43.60px">13</span><span class="b" style="left:53.65px">02</span><span class="b" style="left:63.70px">18</span><span class="b" style="left:73.75px">00</span><span class="b" style="left:87.90px">00</span><span class="b" style="left:97.95px">8E</span><span class="b" style="left:108.00px">01</span><span class="g" style="left:118.05px">2E</span><span class="b" style="left:132.20px">01</span><span class="k" style="left:142.25px">47</span><span class="b" style="left:152.30px">13</span><span class="b" style="left:162.35px">11</span><span class="b" style="left:176.50px">01</span><span class="b" style="left:186.55px">12</span><span class="b" style="left:196.60px">07</span><span class="g" style="left:206.65px">40</span><span class="a" style="left:220.00px"><i class="b">.</i><i class="b">.</i><i class="b">.</i><i class="b">.</i><i class="b">.</i><i class="b">.</i><i class="b">.</i><i class="g">.</i><i class="b">.</i><i class="k">G</i><i class="b">.</i><i class="b">.</i><i class="b">.</i><i class="b">.</i><i class="b">.</i><i class="g">@</i></span></div>
<div class="r" style="top:164.00px"><span class="o" style="left:0.80px">0006:5F50</span><span class="b" style="left:43.60px">18</span><span class="k" style="left:53.65px">64</span><span class="b" style="left:63.70px">13</span><span class="b" style="left:73.75px">96</span><span class="k" style="left:87.90px">42</span><span class="b" style="left:97.95px">19</span><span class="b" style="left:108.00px">01</span><span class="b" style="left:118.05px">13</span><span class="b" style="left:132.20px">00</span><span class="b" style="left:142.25px">00</span><span class="b" style="left:152.30px">8F</span><span class="b" style="left:162.35px">01</span><span class="b" style="left:176.50px">05</span><span class="b" style="left:186.55px">00</span><span class="b" style="left:196.60px">03</span><span class="b" style="left:206.65px">0E</span><span class="a" style="left:220.00px"><i class="b">.</i><i class="k">d</i><i class="b">.</i><i class="b">.</i><i class="k">B</i><i class="b">.</i><i class="b">.</i><i class="b">.</i><i class="b">.</i><i class="b">.</i><i class="b">.</i><i class="b">.</i><i class="b">.</i><i class="b">.</i><i class="b">.</i><i class="b">.</i></span></div>
<div class="r" style="top:172.00px"><span class="o" style="left:0.80px">0006:5F60</span><span class="k" style="left:43.60px">49</span><span class="b" style="left:53.65px">13</span><span class="k" style="left:63.70px">34</span><span class="b" style="left:73.75px">19</span><span class="b" style="left:87.90px">02</span><span class="b" style="left:97.95px">18</span><span class="b" style="left:108.00px">00</span><span class="b" style="left:118.05px">00</span><span class="b" style="left:132.20px">90</span><span class="b" style="left:142.25px">01</span><span class="b" style="left:152.30px">05</span><span class="b" style="left:162.35px">00</span><span class="b" style="left:176.50px">03</span><span class="b" style="left:186.55px">0E</span><span class="g" style="left:196.60px">3A</span><span class="b" style="left:206.65px">0B</span><span class="a" style="left:220.00px"><i class="k">I</i><i class="b">.</i><i class="k">4</i><i class="b">.</i><i class="b">.</i><i class="b">.</i><i class="b">.</i><i class="b">.</i><i class="b">.</i><i class="b">.</i><i class="b">.</i><i class="b">.</i><i class="b">.</i><i class="b">.</i><i class="g">:</i><i class="b">.</i></span></div>
<div class="r" style="top:180.00px"><span class="o" style="left:0.80px">0006:5F70</span><span class="g" style="left:43.60px">3B</span><span class="b" style="left:53.65px">0B</span><span class="k" style="left:63.70px">49</span><span class="b" style="left:73.75px">13</span><span class="b" style="left:87.90px">02</span><span class="b" style="left:97.95px">18</span><span class="b" style="left:108.00px">00</span><span class="b" style="left:118.05px">00</span><span class="b" style="left:132.20px">91</span><span class="b" style="left:142.25px">01</span><span class="k" style="left:152.30px">34</span><span class="b" style="left:162.35px">00</span><span class="b" style="left:176.50px">03</span><span class="b" style="left:186.55px">0E</span><span class="g" style="left:196.60px">3A</span><span class="b" style="left:206.65px">0B</span><span class="a" style="left:220.00px"><i class="g">;</i><i class="b">.</i><i class="k">I</i><i class="b">.</i><i class="b">.</i><i class="b">.</i><i class="b">.</i><i class="b">.</i><i class="b">.</i><i class="b">.</i><i class="k">4</i><i class="b">.</i><i class="b">.</i><i class="b">.</i><i class="g">:</i><i class="b">.</i></span></div>
<div class="r" style="top:189.00px"><span class="o" style="left:0.80px">0006:5F80</span><span class="g" style="left:43.60px">3B</span><span class="b" style="left:53.65px">0B</span><span class="k" style="left:63.70px">49</span><span class="b" style="left:73.75px">13</span><span class="b" style="left:87.90px">02</span><span class="b" style="left:97.95px">18</span><span class="b" style="left:108.00px">00</span><span class="b" style="left:118.05px">00</span><span class="b" style="left:132.20px">92</span><span class="b" style="left:142.25px">01</span><span class="g" style="left:152.30px">21</span><span class="b" style="left:162.35px">00</span><span class="b" style="left:176.50px">00</span><span class="b" style="left:186.55px">00</span><span class="b" style="left:196.60px">93</span><span class="b" style="left:206.65px">01</span><span class="a" style="left:220.00px"><i class="g">;</i><i class="b">.</i><i class="k">I</i><i class="b">.</i><i class="b">.</i><i class="b">.</i><i class="b">.</i><i class="b">.</i><i class="b">.</i><i class="b">.</i><i class="g">!</i><i class="b">.</i><i class="b">.</i><i class="b">.</i><i class="b">.</i><i class="b">.</i></span></div>
<div class="r" style="top:197.00px"><span class="o" style="left:0.80px">0006:5F90</span><span class="k" style="left:43.60px">34</span><span class="b" style="left:53.65px">00</span><span class="b" style="left:63.70px">03</span><span class="b" style="left:73.75px">0E</span><span class="g" style="left:87.90px">3A</span><span class="b" style="left:97.95px">0B</span><span class="g" style="left:108.00px">3B</span><span class="b" style="left:118.05px">0B</span><span class="k" style="left:132.20px">49</span><span class="b" style="left:142.25px">13</span><span class="g" style="left:152.30px">3F</span><span class="b" style="left:162.35px">19</span><span class="k" style="left:176.50px">3C</span><span class="b" style="left:186.55px">19</span><span class="b" style="left:196.60px">00</span><span class="b" style="left:206.65px">00</span><span class="a" style="left:220.00px"><i class="k">4</i><i class="b">.</i><i class="b">.</i><i class="b">.</i><i class="g">:</i><i class="b">.</i><i class="g">;</i><i class="b">.</i><i class="k">I</i><i class="b">.</i><i class="g">?</i><i class="b">.</i><i class="k">&lt;</i><i class="b">.</i><i class="b">.</i><i class="b">.</i></span></div>
<div class="r" style="top:205.00px"><span class="o" style="left:0.80px">0006:5FA0</span><span class="b" style="left:43.60px">94</span><span class="b" style="left:53.65px">01</span><span class="k" style="left:63.70px">34</span><span class="b" style="left:73.75px">00</span><span class="k" style="left:87.90px">47</span><span class="b" style="left:97.95px">13</span><span class="k" style="left:108.00px">6E</span><span class="b" style="left:118.05px">0E</span><span class="b" style="left:132.20px">1C</span><span class="g" style="left:142.25px">0D</span><span class="b" style="left:152.30px">00</span><span class="b" style="left:162.35px">00</span><span class="b" style="left:176.50px">95</span><span class="b" style="left:186.55px">01</span><span class="k" style="left:196.60px">34</span><span class="b" style="left:206.65px">00</span><span class="a" style="left:220.00px"><i class="b">.</i><i class="b">.</i><i class="k">4</i><i class="b">.</i><i class="k">G</i><i class="b">.</i><i class="k">n</i><i class="b">.</i><i class="b">.</i><i class="g">.</i><i class="b">.</i><i class="b">.</i><i class="b">.</i><i class="b">.</i><i class="k">4</i><i class="b">.</i></span></div>
<div class="r" style="top:214.00px"><span class="o" style="left:0.80px">0006:5FB0</span><span class="k" style="left:43.60px">47</span><span class="b" style="left:53.65px">13</span><span class="k" style="left:63.70px">6E</span><span class="b" style="left:73.75px">0E</span><span class="b" style="left:87.90px">1C</span><span class="b" style="left:97.95px">07</span><span class="b" style="left:108.00px">00</span><span class="b" style="left:118.05px">00</span><span class="b" style="left:132.20px">96</span><span class="b" style="left:142.25px">01</span><span class="k" style="left:152.30px">34</span><span class="b" style="left:162.35px">00</span><span class="k" style="left:176.50px">47</span><span class="b" style="left:186.55px">13</span><span class="k" style="left:196.60px">6E</span><span class="b" style="left:206.65px">0E</span><span class="a" style="left:220.00px"><i class="k">G</i><i class="b">.</i><i class="k">n</i><i class="b">.</i><i class="b">.</i><i class="b">.</i><i class="b">.</i><i class="b">.</i><i class="b">.</i><i class="b">.</i><i class="k">4</i><i class="b">.</i><i class="k">G</i><i class="b">.</i><i class="k">n</i><i class="b">.</i></span></div>
<div class="r" style="top:222.00px"><span class="o" style="left:0.80px">0006:5FC0</span><span class="b" style="left:43.60px">1C</span><span class="b" style="left:53.65px">0B</span><span class="b" style="left:63.70px">00</span><span class="b" style="left:73.75px">00</span><span class="b" style="left:87.90px">97</span><span class="b" style="left:97.95px">01</span><span class="k" style="left:108.00px">34</span><span class="b" style="left:118.05px">00</span><span class="k" style="left:132.20px">47</span><span class="b" style="left:142.25px">13</span><span class="k" style="left:152.30px">6E</span><span class="b" style="left:162.35px">0E</span><span class="b" style="left:176.50px">1C</span><span class="b" style="left:186.55px">06</span><span class="b" style="left:196.60px">00</span><span class="b" style="left:206.65px">00</span><span class="a" style="left:220.00px"><i class="b">.</i><i class="b">.</i><i class="b">.</i><i class="b">.</i><i class="b">.</i><i class="b">.</i><i class="k">4</i><i class="b">.</i><i class="k">G</i><i class="b">.</i><i class="k">n</i><i class="b">.</i><i class="b">.</i><i class="b">.</i><i class="b">.</i><i class="b">.</i></span></div>
<div class="r" style="top:231.00px"><span class="o" style="left:0.80px">0006:5FD0</span><span class="b" style="left:43.60px">98</span><span class="b" style="left:53.65px">01</span><span class="k" style="left:63.70px">34</span><span class="b" style="left:73.75px">00</span><span class="k" style="left:87.90px">47</span><span class="b" style="left:97.95px">13</span><span class="k" style="left:108.00px">6E</span><span class="b" style="left:118.05px">0E</span><span class="b" style="left:132.20px">1C</span><span class="b" style="left:142.25px">05</span><span class="b" style="left:152.30px">00</span><span class="b" style="left:162.35px">00</span><span class="b" style="left:176.50px">99</span><span class="b" style="left:186.55px">01</span><span class="k" style="left:196.60px">34</span><span class="b" style="left:206.65px">00</span><span class="a" style="left:220.00px"><i class="b">.</i><i class="b">.</i><i class="k">4</i><i class="b">.</i><i class="k">G</i><i class="b">.</i><i class="k">n</i><i class="b">.</i><i class="b">.</i><i class="b">.</i><i class="b">.</i><i class="b">.</i><i class="b">.</i><i class="b">.</i><i class="k">4</i><i class="b">.</i></span></div>
<div class="r" style="top:239.00px"><span class="o" style="left:0.80px">0006:5FE0</span><span class="k" style="left:43.60px">47</span><span class="b" style="left:53.65px">13</span><span class="k" style="left:63.70px">6E</span><span class="b" style="left:73.75px">0E</span><span class="b" style="left:87.90px">02</span><span class="b" style="left:97.95px">18</span><span class="b" style="left:108.00px">00</span><span class="b" style="left:118.05px">00</span><span class="b" style="left:132.20px">00</span><span class="g" style="left:142.25px">2F</span><span class="b" style="left:152.30px">06</span><span class="b" style="left:162.35px">00</span><span class="b" style="left:176.50px">00</span><span class="b" style="left:186.55px">02</span><span class="b" style="left:196.60px">00</span><span class="b" style="left:206.65px">00</span><span class="a" style="left:220.00px"><i class="k">G</i><i class="b">.</i><i class="k">n</i><i class="b">.</i><i class="b">.</i><i class="b">.</i><i class="b">.</i><i class="b">.</i><i class="b">.</i><i class="g">/</i><i class="b">.</i><i class="b">.</i><i class="b">.</i><i class="b">.</i><i class="b">.</i><i class="b">.</i></span></div>
<div class="r" style="top:247.00px"><span class="o" style="left:0.80px">0006:5FF0</span><span class="b" style="left:43.60px">06</span><span class="b" style="left:53.65px">00</span><span class="b" style="left:63.70px">00</span><span class="b" style="left:73.75px">01</span><span class="b" style="left:87.90px">01</span><span class="k" style="left:97.95px">FB</span><span class="b" style="left:108.00px">0E</span><span class="g" style="left:118.05px">0D</span><span class="b" style="left:132.20px">00</span><span class="b" style="left:142.25px">01</span><span class="b" style="left:152.30px">01</span><span class="b" style="left:162.35px">01</span><span class="b" style="left:176.50px">01</span><span class="b" style="left:186.55px">00</span><span class="b" style="left:196.60px">00</span><span class="b" style="left:206.65px">00</span><span class="a" style="left:220.00px"><i class="b">.</i><i class="b">.</i><i class="b">.</i><i class="b">.</i><i class="b">.</i><i class="k">û</i><i class="b">.</i><i class="g">.</i><i class="b">.</i><i class="b">.</i><i class="b">.</i><i class="b">.</i><i class="b">.</i><i class="b">.</i><i class="b">.</i><i class="b">.</i></span></div>
<div class="r" style="top:256.00px"><span class="o" style="left:0.80px">0006:6000</span><span class="b" style="left:43.60px">01</span><span class="b" style="left:53.65px">00</span><span class="b" style="left:63.70px">00</span><span class="b" style="left:73.75px">01</span><span class="g" style="left:87.90px">2E</span><span class="g" style="left:97.95px">2E</span><span class="g" style="left:108.00px">2F</span><span class="k" style="left:118.05px">68</span><span class="k" style="left:132.20px">65</span><span class="k" style="left:142.25px">6C</span><span class="k" style="left:152.30px">6C</span><span class="k" style="left:162.35px">6F</span><span class="k" style="left:176.50px">77</span><span class="k" style="left:186.55px">6F</span><span class="k" style="left:196.60px">72</span><span class="k" style="left:206.65px">6C</span><span class="a" style="left:220.00px"><i class="b">.</i><i class="b">.</i><i class="b">.</i><i class="b">.</i><i class="g">.</i><i class="g">.</i><i class="g">/</i><i class="k">h</i><i class="k">e</i><i class="k">l</i><i class="k">l</i><i class="k">o</i><i class="k">w</i><i class="k">o</i><i class="k">r</i><i class="k">l</i></span></div>
<div class="r" style="top:264.00px"><span class="o" style="left:0.80px">0006:6010</span><span class="k" style="left:43.60px">64</span><span class="b" style="left:53.65px">00</span><span class="g" style="left:63.70px">2F</span><span class="k" style="left:73.75px">75</span><span class="k" style="left:87.90px">73</span><span class="k" style="left:97.95px">72</span><span class="g" style="left:108.00px">2F</span><span class="k" style="left:118.05px">69</span><span class="k" style="left:132.20px">6E</span><span class="k" style="left:142.25px">63</span><span class="k" style="left:152.30px">6C</span><span class="k" style="left:162.35px">75</span><span class="k" style="left:176.50px">64</span><span class="k" style="left:186.55px">65</span><span class="g" style="left:196.60px">2F</span><span class="k" style="left:206.65px">63</span><span class="a" style="left:220.00px"><i class="k">d</i><i class="b">.</i><i class="g">/</i><i class="k">u</i><i class="k">s</i><i class="k">r</i><i class="g">/</i><i class="k">i</i><i class="k">n</i><i class="k">c</i><i class="k">l</i><i class="k">u</i><i class="k">d</i><i class="k">e</i><i class="g">/</i><i class="k">c</i></span></div>
<div class="r" style="top:272.00px"><span class="o" style="left:0.80px">0006:6020</span><span class="k" style="left:43.60px">2B</span><span class="k" style="left:53.65px">2B</span><span class="g" style="left:63.70px">2F</span><span class="k" style="left:73.75px">35</span><span class="g" style="left:87.90px">2E</span><span class="k" style="left:97.95px">33</span><span class="g" style="left:108.00px">2E</span><span class="k" style="left:118.05px">30</span><span class="g" style="left:132.20px">2F</span><span class="k" style="left:142.25px">62</span><span class="k" style="left:152.30px">69</span><span class="k" style="left:162.35px">74</span><span class="k" style="left:176.50px">73</span><span class="b" style="left:186.55px">00</span><span class="g" style="left:196.60px">2F</span><span class="k" style="left:206.65px">75</span><span class="a" style="left:220.00px"><i class="k">+</i><i class="k">+</i><i class="g">/</i><i class="k">5</i><i class="g">.</i><i class="k">3</i><i class="g">.</i><i class="k">0</i><i class="g">/</i><i class="k">b</i><i class="k">i</i><i class="k">t</i><i class="k">s</i><i class="b">.</i><i class="g">/</i><i class="k">u</i></span></div>
<div class="r" style="top:281.00px"><span class="o" style="left:0.80px">0006:6030</span><span class="k" style="left:43.60px">73</span><span class="k" style="left:53.65px">72</span><span class="g" style="left:63.70px">2F</span><span class="k" style="left:73.75px">69</span><span class="k" style="left:87.90px">6E</span><span class="k" style="left:97.95px">63</span><span class="k" style="left:108.00px">6C</span><span class="k" style="left:118.05px">75</span><span class="k" style="left:132.20px">64</span><span class="k" style="left:142.25px">65</span><span class="g" style="left:152.30px">2F</span><span class="k" style="left:162.35px">63</span><span class="k" style="left:176.50px">2B</span><span class="k" style="left:186.55px">2B</span><span class="g" style="left:196.60px">2F</span><span class="k" style="left:206.65px">35</span><span class="a" style="left:220.00px"><i class="k">s</i><i class="k">r</i><i class="g">/</i><i class="k">i</i><i class="k">n</i><i class="k">c</i><i class="k">l</i><i class="k">u</i><i class="k">d</i><i class="k">e</i><i class="g">/</i><i class="k">c</i><i class="k">+</i><i class="k">+</i><i class="g">/</i><i class="k">5</i></span></div>
<div class="r" style="top:289.00px"><span class="o" style="left:0.80px">0006:6040</span><span class="g" style="left:43.60px">2E</span><span class="k" style="left:53.65px">33</span><span class="g" style="left:63.70px">2E</span><span class="k" style="left:73.75px">30</span><span class="b" style="left:87.90px">00</span><span class="g" style="left:97.95px">2F</span><span class="k" style="left:108.00px">75</span><span class="k" style="left:118.05px">73</span><span class="k" style="left:132.20px">72</span><span class="g" style="left:142.25px">2F</span><span class="k" style="left:152.30px">69</span><span class="k" style="left:162.35px">6E</span><span class="k" style="left:176.50px">63</span><span class="k" style="left:186.55px">6C</span><span class="k" style="left:196.60px">75</span><span class="k" style="left:206.65px">64</span><span class="a" style="left:220.00px"><i class="g">.</i><i class="k">3</i><i class="g">.</i><i class="k">0</i><i class="b">.</i><i class="g">/</i><i class="k">u</i><i class="k">s</i><i class="k">r</i><i class="g">/</i><i class="k">i</i><i class="k">n</i><i class="k">c</i><i class="k">l</i><i class="k">u</i><i class="k">d</i></span></div>
<div class="r" style="top:297.00px"><span class="o" style="left:0.80px">0006:6050</span><span class="k" style="left:43.60px">65</span><span class="g" style="left:53.65px">2F</span><span class="k" style="left:63.70px">63</span><span class="k" style="left:73.75px">2B</span><span class="k" style="left:87.90px">2B</span><span class="g" style="left:97.95px">2F</span><span class="k" style="left:108.00px">35</span><span class="g" style="left:118.05px">2E</span><span class="k" style="left:132.20px">33</span><span class="g" style="left:142.25px">2E</span><span class="k" style="left:152.30px">30</span><span class="g" style="left:162.35px">2F</span><span class="k" style="left:176.50px">78</span><span class="k" style="left:186.55px">38</span><span class="k" style="left:196.60px">36</span><span class="g" style="left:206.65px">5F</span><span class="a" style="left:220.00px"><i class="k">e</i><i class="g">/</i><i class="k">c</i><i class="k">+</i><i class="k">+</i><i class="g">/</i><i class="k">5</i><i class="g">.</i><i class="k">3</i><i class="g">.</i><i class="k">0</i><i class="g">/</i><i class="k">x</i><i class="k">8</i><i class="k">6</i><i class="g">_</i></span></div>
<div class="r" style="top:306.00px"><span class="o" style="left:0.80px">0006:6060</span><span class="k" style="left:43.60px">36</span><span class="k" style="left:53.65px">34</span><span class="g" style="left:63.70px">2D</span><span class="k" style="left:73.75px">6C</span><span class="k" style="left:87.90px">69</span><span class="k" style="left:97.95px">6E</span><span class="k" style="left:108.00px">75</span><span class="k" style="left:118.05px">78</span><span class="g" style="left:132.20px">2D</span><span class="k" style="left:142.25px">67</span><span class="k" style="left:152.30px">6E</span><span class="k" style="left:162.35px">75</span><span class="g" style="left:176.50px">2F</span><span class="k" style="left:186.55px">63</span><span class="k" style="left:196.60px">2B</span><span class="k" style="left:206.65px">2B</span><span class="a" style="left:220.00px"><i class="k">6</i><i class="k">4</i><i class="g">-</i><i class="k">l</i><i class="k">i</i><i class="k">n</i><i class="k">u</i><i class="k">x</i><i class="g">-</i><i class="k">g</i><i class="k">n</i><i class="k">u</i><i class="g">/</i><i class="k">c</i><i class="k">+</i><i class="k">+</i></span></div>
<div style="position:absolute;left:224.50px;top:121.00px;width:4px;height:7.5px;border:1px solid #3daee9;box-sizing:border-box;"></div>
<svg style="position:absolute;left:296px;top:3px" width="8" height="6"><path d="M1 4.5 L4 1.5 L7 4.5" fill="none" stroke="#31363b" stroke-width="0.9"/></svg>
<div style="position:absolute;left:297.20px;top:12px;width:5.7px;height:283px;background:#b9bbbd;border-radius:3px;"></div>
<div style="position:absolute;left:297.00px;top:192px;width:6px;height:6px;background:#3daee9;border-radius:50%;"></div>
<svg style="position:absolute;left:296px;top:299px" width="8" height="6"><path d="M1 1.5 L4 4.5 L7 1.5" fill="none" stroke="#31363b" stroke-width="0.9"/></svg>
</div>
<div style="position:absolute;left:495px;top:63px;width:186px;height:134px;background:#f3f4f4;border:1px solid #d3d5d6;box-sizing:border-box;border-radius:2px;"></div>
<div class="t" style="left:498.8px;top:65.30px;line-height:12px;font-size:8.6px;color:#232627;">Bookmarks</div>
<svg style="position:absolute;left:653px;top:66px;" width="8" height="8" viewBox="0 0 8 8"><path d="M4.5 2.2 L6.8 4.5 L4.5 6.8 L2.2 4.5 Z" fill="none" stroke="#3a3f44" stroke-width="0.8"/></svg>
<svg style="position:absolute;left:665px;top:64px;" width="12" height="12" viewBox="0 0 12 12"><circle cx="6.100000000000023" cy="6.5" r="4.6" fill="#7f8386"/><path d="M3.700000000000023 4.1 L8.500000000000023 8.9 M8.500000000000023 4.1 L3.700000000000023 8.9" stroke="#f3f4f4" stroke-width="0.85"/></svg>
<div style="position:absolute;left:497px;top:81px;width:182px;height:92px;background:#fcfcfc;border:1px solid #d3d5d6;box-sizing:border-box;"></div>
<div style="position:absolute;left:498px;top:82px;width:180px;height:16.599999999999994px;background:#eff0f1;border-bottom:1px solid #d8dadb;box-sizing:border-box;"></div>
<div style="position:absolute;left:556.2px;top:82px;width:1.0px;height:16px;background:#d3d5d6;"></div>
<div class="t" style="left:500.8px;top:84.50px;line-height:12px;font-size:8.6px;color:#232627;">Offset</div>
<div class="t" style="left:560.8px;top:84.50px;line-height:12px;font-size:8.6px;color:#232627;">Title</div>
<div class="t" style="left:498.8px;top:100.80px;line-height:12px;font-size:8.6px;color:#232627;">0006:6C65</div>
<div class="t" style="left:559px;top:100.80px;line-height:12px;font-size:8.6px;color:#232627;">qtoolbar.h</div>
<div style="position:absolute;left:497px;top:178.2px;width:16.600000000000023px;height:17.30000000000001px;background:#eceded;border:1px solid #c7c9cb;box-sizing:border-box;border-radius:2px;"></div>
<svg style="position:absolute;left:501px;top:182px;" width="10" height="10" viewBox="0 0 10 10"><rect x="1.5" y="1.5" width="5" height="7" rx="0.6" fill="none" stroke="#232627" stroke-width="1"/></svg>
<div style="position:absolute;left:519px;top:178.2px;width:17px;height:17.30000000000001px;background:#e3e4e5;border:1px solid #dadbdc;box-sizing:border-box;border-radius:2px;"></div>
<svg style="position:absolute;left:523px;top:182px;" width="10" height="10" viewBox="0 0 10 10"><path d="M1.5 2.5 H8.5 M3.5 2.5 V1 H6.5 V2.5 M2.5 4 L3 9.5 H7 L7.5 4" fill="none" stroke="#b0b3b5" stroke-width="0.9"/></svg>
<div style="position:absolute;left:640px;top:178.2px;width:16.700000000000045px;height:17.30000000000001px;background:#e3e4e5;border:1px solid #dadbdc;box-sizing:border-box;border-radius:2px;"></div>
<svg style="position:absolute;left:643.5px;top:182px;" width="10" height="10" viewBox="0 0 10 10"><path d="M2 1.5 L6 5 L2 8.5" fill="none" stroke="#5d6165" stroke-width="0.9"/><circle cx="8" cy="5" r="0.6" fill="#5d6165"/></svg>
<div style="position:absolute;left:662px;top:178.2px;width:17px;height:17.30000000000001px;background:#e3e4e5;border:1px solid #dadbdc;box-sizing:border-box;border-radius:2px;"></div>
<svg style="position:absolute;left:665.5px;top:182px;" width="10" height="10" viewBox="0 0 10 10"><path d="M1.5 8.5 L2 6.5 L6.5 2 L8 3.5 L3.5 8 Z" fill="none" stroke="#5d6165" stroke-width="0.9"/><path d="M5.5 3 L7 4.5" stroke="#5d6165" stroke-width="0.9"/></svg>
<div style="position:absolute;left:495.5px;top:197.2px;width:166.79999999999995px;height:16.100000000000023px;background:#d1d2d3;"></div>
<div style="position:absolute;left:495.5px;top:197.2px;width:46.89999999999998px;height:16.100000000000023px;background:#f1f2f3;border:1px solid #cfd1d2;box-sizing:border-box;"></div>
<div class="t" style="left:495.5px;width:46.89999999999998px;text-align:center;transform-origin:50% 50%;top:200.05px;line-height:12px;font-size:8.6px;color:#232627;">Bookma...</div>
<div class="t" style="left:542.4px;width:47.5px;text-align:center;transform-origin:50% 50%;top:200.05px;line-height:12px;font-size:8.6px;color:#232627;">Statistics</div>
<div class="t" style="left:590px;width:48.200000000000045px;text-align:center;transform-origin:50% 50%;top:200.05px;line-height:12px;font-size:8.6px;color:#232627;">Strings</div>
<div style="position:absolute;left:589.5px;top:197.2px;width:1.0px;height:16.100000000000023px;background:#c2c4c5;"></div>
<div style="position:absolute;left:638px;top:197.2px;width:1px;height:16.100000000000023px;background:#c2c4c5;"></div>
<div style="position:absolute;left:639px;top:197.2px;width:23.3px;height:16px;overflow:hidden;"><div class="t" style="left:2.5px;top:3px;line-height:12px;font-size:8.6px;color:#232627;">Binary</div></div>
<svg style="position:absolute;left:664.5px;top:201px;" width="6" height="9" viewBox="0 0 6 9"><path d="M4.5 1 L1.5 4.5 L4.5 8" fill="none" stroke="#a5a8aa" stroke-width="0.9"/></svg>
<svg style="position:absolute;left:673px;top:201px;" width="6" height="9" viewBox="0 0 6 9"><path d="M1.5 1 L4.5 4.5 L1.5 8" fill="none" stroke="#232627" stroke-width="0.9"/></svg>
<div style="position:absolute;left:495px;top:215px;width:186px;height:158px;background:#f3f4f4;border:1px solid #d3d5d6;box-sizing:border-box;border-radius:2px;"></div>
<div class="t" style="left:498.8px;top:217.90px;line-height:12px;font-size:8.6px;color:#232627;">Checksum</div>
<svg style="position:absolute;left:653px;top:219px;" width="8" height="8" viewBox="0 0 8 8"><path d="M4.5 2.2 L6.8 4.5 L4.5 6.8 L2.2 4.5 Z" fill="none" stroke="#3a3f44" stroke-width="0.8"/></svg>
<svg style="position:absolute;left:665px;top:217px;" width="12" height="12" viewBox="0 0 12 12"><circle cx="6.100000000000023" cy="6.5" r="4.6" fill="#7f8386"/><path d="M3.700000000000023 4.1 L8.500000000000023 8.9 M8.500000000000023 4.1 L3.700000000000023 8.9" stroke="#f3f4f4" stroke-width="0.85"/></svg>
<div class="t" style="left:496.3px;top:236.70px;line-height:12px;font-size:8.6px;color:#232627;">Algorithm:</div>
<div style="position:absolute;left:539.5px;top:233.4px;width:139.89999999999998px;height:18.099999999999994px;background:linear-gradient(#eff0f1,#e8e9ea);border:1px solid #c4c6c8;box-sizing:border-box;border-radius:2px;"></div>
<div class="t" style="left:542.8px;top:236.50px;line-height:12px;font-size:8.6px;color:#232627;">SHA-512</div>
<svg style="position:absolute;left:668.5px;top:240px;" width="8" height="5" viewBox="0 0 8 5"><path d="M0.8 0.8 L4 4 L7.2 0.8" fill="none" stroke="#232627" stroke-width="0.9"/></svg>
<div style="position:absolute;left:497px;top:256px;width:182px;height:42.5px;background:#f3f4f4;border:1px solid #d3d5d6;box-sizing:border-box;border-radius:2px;"></div>
<div class="t" style="left:497px;width:182px;text-align:center;transform-origin:50% 50%;top:258.60px;line-height:12px;font-size:8.6px;color:#232627;">Parameters</div>
<div style="position:absolute;left:625.5px;top:304.2px;width:53.89999999999998px;height:18.80000000000001px;background:#e3e4e5;border:1px solid #dadbdc;box-sizing:border-box;border-radius:2px;"></div>
<svg style="position:absolute;left:629.5px;top:309px;" width="10" height="10" viewBox="0 0 10 10"><circle cx="5" cy="5" r="2.8" fill="none" stroke="#7b7f83" stroke-width="1"/><circle cx="5" cy="5" r="1" fill="#7b7f83"/><path d="M5 0.8 V2 M5 8 V9.2 M0.8 5 H2 M8 5 H9.2 M2 2 L2.8 2.8 M7.2 7.2 L8 8 M8 2 L7.2 2.8 M2 8 L2.8 7.2" stroke="#7b7f83" stroke-width="1"/></svg>
<div class="t" style="left:641.8px;top:307.80px;line-height:12px;font-size:8.6px;color:#a5a8aa;">Calculate</div>
<div style="position:absolute;left:497px;top:328.3px;width:182px;height:17.19999999999999px;background:#fcfcfc;border:1px solid #d3d5d6;box-sizing:border-box;border-radius:2px;"></div>
<div class="t" style="left:499.8px;top:330.80px;line-height:12px;font-size:8.6px;color:#232627;">9ac1347bad55167acbefbee95ce9f4c8c67f44761</div>
<div style="position:absolute;left:495.5px;top:374px;width:47.299999999999955px;height:15.600000000000023px;background:#d1d2d3;"></div>
<div class="t" style="left:495.5px;width:47.299999999999955px;text-align:center;transform-origin:50% 50%;top:376.60px;line-height:12px;font-size:8.6px;color:#232627;">File Info</div>
<div style="position:absolute;left:542.8px;top:374px;width:47.10000000000002px;height:15.600000000000023px;background:#f1f2f3;border:1px solid #cfd1d2;box-sizing:border-box;"></div>
<div class="t" style="left:542.8px;width:47.10000000000002px;text-align:center;transform-origin:50% 50%;top:376.60px;line-height:12px;font-size:8.6px;color:#232627;">Checksum</div>
<div class="t" style="left:67px;top:394.50px;line-height:12px;font-size:8.6px;color:#232627;">Offset: 0006:5F01</div>
<div class="t" style="left:140.2px;top:394.50px;line-height:12px;font-size:8.6px;color:#232627;">Selection: -</div>
<div style="position:absolute;left:346.2px;top:392.3px;width:24.400000000000034px;height:16.30000000000001px;background:#d3d4d5;border-radius:2px;"></div>
<div class="t" style="left:346.2px;width:24.400000000000034px;text-align:center;transform-origin:50% 50%;top:394.50px;line-height:12px;font-size:8.6px;color:#232627;">OVR</div>
<div style="position:absolute;left:376.3px;top:392px;width:64.09999999999997px;height:17px;background:linear-gradient(#f0f1f2,#e8e9ea);border:1px solid #c4c6c8;box-sizing:border-box;border-radius:2px;"></div>
<div class="t" style="left:380px;top:394.50px;line-height:12px;font-size:8.6px;color:#232627;">Hexadecimal</div>
<svg style="position:absolute;left:430.5px;top:398px;" width="8" height="5" viewBox="0 0 8 5"><path d="M0.8 0.8 L4 4 L7.2 0.8" fill="none" stroke="#232627" stroke-width="0.9"/></svg>
<div style="position:absolute;left:445.3px;top:392px;width:69.80000000000001px;height:17px;background:linear-gradient(#f0f1f2,#e8e9ea);border:1px solid #c4c6c8;box-sizing:border-box;border-radius:2px;"></div>
<div class="t" style="left:448.6px;top:394.50px;line-height:12px;font-size:8.6px;color:#232627;">ISO-8859-1</div>
<svg style="position:absolute;left:505.5px;top:398px;" width="8" height="5" viewBox="0 0 8 5"><path d="M0.8 0.8 L4 4 L7.2 0.8" fill="none" stroke="#232627" stroke-width="0.9"/></svg>
<svg style="position:absolute;left:550px;top:395px;" width="10" height="10" viewBox="0 0 10 10"><path d="M2.5 4.5 V3.2 C2.5 0.9 6.5 0.9 6.5 2.8" fill="none" stroke="#232627" stroke-width="0.8"/><rect x="1.5" y="5.5" width="7" height="3.5" fill="none" stroke="#232627" stroke-width="0.9"/></svg>
<svg style="position:absolute;left:570px;top:395px;" width="10" height="10" viewBox="0 0 10 10"><rect x="1.5" y="1.5" width="7.5" height="7.5" fill="none" stroke="#232627" stroke-width="0.8"/><path d="M7 3.5 L4.5 6 M4.5 4 V6 H6.5" fill="none" stroke="#232627" stroke-width="0.8"/><rect x="2" y="6.8" width="1.8" height="1.8" fill="none" stroke="#232627" stroke-width="0.6"/></svg>
<div style="position:absolute;left:584.5px;top:398.5px;width:53.0px;height:4.0px;background:#b9bbbd;border-radius:2px;"></div>
<div style="position:absolute;left:584.5px;top:398.5px;width:27.0px;height:4.0px;background:#3daee9;border-radius:2px;"></div>
<div style="position:absolute;left:606.2px;top:395.3px;width:10.4px;height:10.4px;background:#f7f7f7;border:1px solid #8c9094;box-sizing:border-box;border-radius:50%;"></div>
<svg style="position:absolute;left:643px;top:395px;" width="10" height="10" viewBox="0 0 10 10"><path d="M1.5 3 V1.5 H3 M7 1.5 H8.5 V3 M8.5 7 V8.5 H7 M3 8.5 H1.5 V7" fill="none" stroke="#232627" stroke-width="0.8"/><path d="M4 4 L6.5 6.5 M6.5 2.5 L8 1.5 M5 5 L8.5 1.5 M2.5 7.5 L4 6" stroke="#232627" stroke-width="0.7"/></svg></body></html>
